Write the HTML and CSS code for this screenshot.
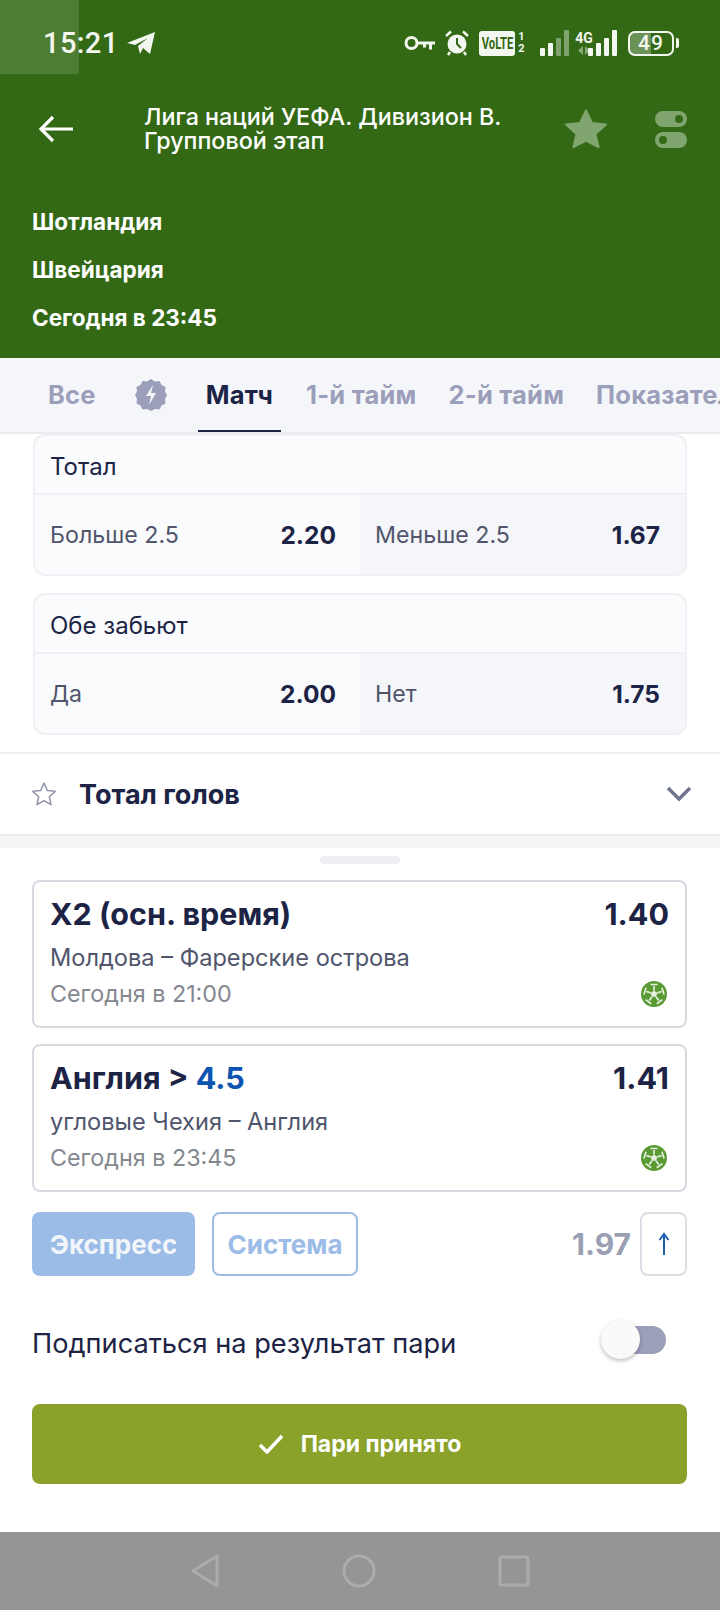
FILE: index.html
```html
<!DOCTYPE html>
<html lang="ru">
<head>
    <meta charset="UTF-8" />
    <meta name="viewport" content="width=device-width, initial-scale=1.0" />
    <title>Пари</title>
    <link rel="stylesheet" href="styles.css">
</head>
<body>
    <div class="screen">
        <header class="header">
            <div class="corner-glow"></div>
            <div class="status-bar">
                <span class="clock">15:21</span>
                <svg class="tg-icon" width="30" height="24" viewBox="0 0 30 24"><path d="M1 12 29 1 24 23 17 17 14 23 12 15 22 7 9 14Z" fill="#f4f7f0"/></svg>
                <div class="status-icons">
                    <svg width="32" height="18" viewBox="0 0 32 18"><circle cx="7.5" cy="9" r="5.5" fill="none" stroke="#f4f7f0" stroke-width="3"/><path d="M13 7.5h18v3h-3v5h-3v-5h-3v3h-3v-3h-6z" fill="#f4f7f0"/></svg>
                    <svg class="alarm" width="26" height="26" viewBox="0 0 26 26"><circle cx="13" cy="14" r="9.5" fill="#f4f7f0"/><path d="M13 8v6l4 4" fill="none" stroke="#336915" stroke-width="2"/><path d="M2 6 7 1.500M24 6 19 1.500M6 22l-2 3M20 22l2 3" stroke="#f4f7f0" stroke-width="2.500"/></svg>
                    <span class="volte"><span>VoLTE</span></span>
                    <span class="sim-nums"><span>1</span><span>2</span></span>
                    <svg class="signal-a" width="30" height="26" viewBox="0 0 30 26"><g fill="#f4f7f0"><rect x="0" y="18" width="5" height="8" rx="1"/><rect x="8" y="13" width="5" height="13" rx="1"/><rect x="16" y="8" width="5" height="18" rx="1" opacity=".4"/><rect x="24" y="0" width="5" height="26" rx="1" opacity=".4"/></g></svg>
                    <div class="net">
                        <span class="net-label">4G</span>
                        <svg width="14" height="9" viewBox="0 0 14 9"><path d="M6 0v9L1 4.500zM8 0v9l5-4.500z" fill="#f4f7f0" opacity=".45"/></svg>
                    </div>
                    <svg class="signal-b" width="30" height="26" viewBox="0 0 30 26"><g fill="#f4f7f0"><rect x="0" y="18" width="5" height="8" rx="1"/><rect x="8" y="13" width="5" height="13" rx="1"/><rect x="16" y="8" width="5" height="18" rx="1"/><rect x="24" y="0" width="5" height="26" rx="1"/></g></svg>
                    <div class="battery"><span>49</span></div>
                    <span class="battery-tip"></span>
                </div>
            </div>

            <div class="title-row">
                <svg class="back-icon" width="36" height="28" viewBox="0 0 36 28"><path d="M15 2 3 14l12 12M3 14h32" fill="none" stroke="#fff" stroke-width="3.200"/></svg>
                <div class="league">Лига наций УЕФА. Дивизион В.<br>Групповой этап</div>
                <svg class="star-icon" width="42" height="40" viewBox="0 0 42 40"><path d="M21 1.500 27 14l14 1.500-10.500 9.500L33.500 38 21 31.500 8.500 38l3-13L1 15.500 15 14z" fill="#80a56e" stroke="#80a56e" stroke-linejoin="round" stroke-width="2"/></svg>
                <svg class="switch-icon" width="32" height="37" viewBox="0 0 32 37"><rect x="0" y="0" width="32" height="16" rx="8" fill="#80a56e"/><circle cx="24" cy="8" r="4" fill="#336915"/><rect x="0" y="21" width="32" height="16" rx="8" fill="#80a56e"/><circle cx="8" cy="29" r="4" fill="#336915"/></svg>
            </div>

            <div class="match-info">
                <div>Шотландия</div>
                <div>Швейцария</div>
                <div>Сегодня в 23:45</div>
            </div>
        </header>

        <nav class="tabs">
            <span class="tab tab-all">Все</span>
            <svg class="tab-bolt" width="32" height="32" viewBox="0 0 32 32"><path d="M16 0l4 2.500 4.500-.500 2 4 4 2-.500 4.500L32 16l-2 4 .500 4.500-4 2-2 4-4.500-.500L16 32l-4-2-4.500.500-2-4-4-2L2 20l-2-4 2-3.500L1.500 8l4-2 2-4 4.500.500z" fill="#9b9fba"/><path d="M18 6l-7 11h5l-2 9 7-12h-5z" fill="#f5f6fa"/></svg>
            <span class="tab tab-active">Матч</span>
            <span class="tab">1-й тайм</span>
            <span class="tab">2-й тайм</span>
            <span class="tab">Показатели</span>
        </nav>

        <section class="markets">
            <div class="market">
                <div class="market-name">Тотал</div>
                <div class="market-odds">
                    <div class="odd"><span>Больше 2.5</span><b>2.20</b></div>
                    <div class="odd odd-alt"><span>Меньше 2.5</span><b>1.67</b></div>
                </div>
            </div>
            <div class="market">
                <div class="market-name">Обе забьют</div>
                <div class="market-odds">
                    <div class="odd"><span>Да</span><b>2.00</b></div>
                    <div class="odd odd-alt"><span>Нет</span><b>1.75</b></div>
                </div>
            </div>
        </section>

        <div class="collapsed-market">
            <svg width="26" height="26" viewBox="0 0 26 26"><path d="M13 2l3.300 7.500 8 .800-6 5.400 1.700 8L13 19.600 6 23.700l1.700-8-6-5.400 8-.800z" fill="none" stroke="#8f93a8" stroke-width="1.500" stroke-linejoin="round"/></svg>
            <span class="collapsed-title">Тотал голов</span>
            <svg class="chevron" width="26" height="16" viewBox="0 0 26 16"><path d="M2 2l11 11L24 2" fill="none" stroke="#70758f" stroke-width="3.500"/></svg>
        </div>

        <div class="sheet-gap"></div>

        <section class="sheet">
            <div class="handle"></div>

            <div class="bet">
                <div class="bet-top"><span>Х2 (осн. время)</span><span>1.40</span></div>
                <div class="bet-teams">Молдова – Фарерские острова</div>
                <div class="bet-bottom">
                    <span>Сегодня в 21:00</span>
                    <svg width="26" height="26" viewBox="0 0 26 26"><circle cx="13" cy="13" r="13" fill="#5a9a35"/><path d="M13 9.500V5M16.300 11.900l4.300-1.400M15.100 15.800l2.600 3.700M10.900 15.800l-2.600 3.700M9.700 11.900l-4.300-1.400M9.500 3.500h7M20.900 6.800l2.200 6.600M21.400 18.600l-5.600 4.200M4.600 18.600l5.600 4.200M5.100 6.800l-2.200 6.600" fill="none" stroke="#e6f0df" stroke-width="1.700"/><path d="M13 9.500l3.300 2.400-1.200 3.900h-4.200l-1.200-3.900z" fill="#e6f0df"/></svg>
                </div>
            </div>

            <div class="bet">
                <div class="bet-top"><span>Англия &gt; <em>4.5</em></span><span>1.41</span></div>
                <div class="bet-teams">угловые Чехия – Англия</div>
                <div class="bet-bottom">
                    <span>Сегодня в 23:45</span>
                    <svg width="26" height="26" viewBox="0 0 26 26"><circle cx="13" cy="13" r="13" fill="#5a9a35"/><path d="M13 9.500V5M16.300 11.900l4.300-1.400M15.100 15.800l2.600 3.700M10.900 15.800l-2.600 3.700M9.700 11.900l-4.300-1.400M9.500 3.500h7M20.900 6.800l2.200 6.600M21.400 18.600l-5.600 4.200M4.600 18.600l5.600 4.200M5.100 6.800l-2.200 6.600" fill="none" stroke="#e6f0df" stroke-width="1.700"/><path d="M13 9.500l3.300 2.400-1.200 3.900h-4.200l-1.200-3.900z" fill="#e6f0df"/></svg>
                </div>
            </div>

            <div class="bet-type">
                <span class="type-btn type-active">Экспресс</span>
                <span class="type-btn">Система</span>
                <span class="total-odd">1.97</span>
                <span class="up-btn">
                    <svg width="12" height="24" viewBox="0 0 12 24"><path d="M6 23V2M1.500 8 6 2l4.500 6" fill="none" stroke="#1d5fae" stroke-width="2"/></svg>
                </span>
            </div>

            <div class="subscribe">
                <span>Подписаться на результат пари</span>
                <div class="switch"><span class="switch-knob"></span></div>
            </div>

            <div class="accept-btn">
                <svg width="26" height="20" viewBox="0 0 26 20"><path d="M2 11l7 7L24 2" fill="none" stroke="#fff" stroke-width="3.500"/></svg>
                <span>Пари принято</span>
            </div>
        </section>

        <footer class="nav-bar">
            <svg width="30" height="34" viewBox="0 0 30 34"><path d="M27 2v30L3 17z" fill="none" stroke="#acacac" stroke-width="3" stroke-linejoin="round"/></svg>
            <svg width="34" height="34" viewBox="0 0 34 34"><circle cx="17" cy="17" r="15" fill="none" stroke="#acacac" stroke-width="3"/></svg>
            <svg width="32" height="32" viewBox="0 0 32 32"><rect x="2" y="2" width="28" height="28" rx="2" fill="none" stroke="#acacac" stroke-width="3"/></svg>
        </footer>
    </div>
</body>
</html>
```

FILE: styles.css
```css
* {
    box-sizing: border-box;
}

body {
    margin: 0;
    font-family: Inter, "Noto Sans", sans-serif;
    background: #fff;
    color: #1c2345;
}

.screen {
    width: 720px;
    height: 1610px;
    overflow: hidden;
}

/* шапка */
.header {
    position: relative;
    height: 358px;
    background: #336915;
    color: #fff;
}

.corner-glow {
    position: absolute;
    left: 0;
    top: 0;
    width: 79px;
    height: 74px;
    background: rgba(255, 255, 255, 0.13);
}

.status-bar {
    position: relative;
    display: flex;
    align-items: center;
    height: 86px;
    padding-left: 43px;
    color: #f4f7f0;
}

.clock {
    font-family: Roboto, sans-serif;
    font-size: 29px;
    font-weight: 500;
    letter-spacing: 0.4px;
}

.tg-icon {
    margin-left: 7px;
}

.status-icons {
    display: flex;
    align-items: center;
    margin-left: auto;
    margin-right: 41px;
    font-family: Roboto, sans-serif;
}

.alarm {
    margin-left: 8px;
}

.volte {
    display: flex;
    justify-content: center;
    width: 36px;
    height: 25px;
    margin-left: 9px;
    border-radius: 3px;
    background: #f4f7f0;
    color: #336915;
    font-size: 16px;
    font-weight: 700;
    line-height: 25px;
}

.volte span {
    transform: scaleX(0.7);
}

.sim-nums {
    display: flex;
    flex-direction: column;
    width: 9px;
    margin-left: 2px;
    font-size: 11px;
    font-weight: 700;
    line-height: 12px;
    text-align: center;
}

.signal-a {
    margin-left: 14px;
}

.net {
    display: flex;
    flex-direction: column;
    align-items: center;
    width: 20px;
    margin-left: 4px;
    margin-right: -6px;
    height: 26px;
}

.net-label {
    font-size: 14px;
    font-weight: 700;
    line-height: 16px;
}

.battery {
    display: flex;
    align-items: center;
    justify-content: center;
    width: 46px;
    height: 25px;
    margin-left: 10px;
    border: 2px solid #f4f7f0;
    border-radius: 7px;
    background: linear-gradient(90deg, #6b9358 49%, transparent 49%);
    font-size: 21px;
    font-weight: 500;
    letter-spacing: 1px;
}

.battery-tip {
    width: 3px;
    height: 10px;
    margin-left: 2px;
    border-radius: 0 2px 2px 0;
    background: #f4f7f0;
}

.title-row {
    display: flex;
    align-items: center;
    height: 86px;
}

.back-icon {
    margin-left: 38px;
}

.league {
    margin-left: 70px;
    width: 421px;
    font-size: 23.3px;
    line-height: 24px;
    font-weight: 500;
}

.switch-icon {
    margin-left: 48px;
}

.match-info {
    padding: 26px 0 0 32px;
    font-size: 22.5px;
    font-weight: 700;
    line-height: 48px;
}

/* вкладки */
.tabs {
    display: flex;
    align-items: center;
    height: 76px;
    padding-left: 48px;
    overflow: hidden;
    background: #f5f6fa;
    border-bottom: 2px solid #e9ebef;
    font-size: 25.5px;
    font-weight: 700;
    letter-spacing: 0.2px;
    color: #9b9fba;
    white-space: nowrap;
}

.tab {
    flex: none;
    line-height: 74px;
    margin-right: 32px;
}

.tab-all {
    margin-right: 39px;
}

.tab-bolt {
    flex: none;
    margin-right: 31px;
}

.tab-active {
    height: 74px;
    margin-right: 25px;
    padding: 0 8px;
    color: #1c2345;
    border-bottom: 2px solid #1c2345;
}

/* рынки */
.markets {
    padding: 0 33px;
}

.market {
    height: 142px;
    margin-bottom: 17px;
    border: 2px solid #eef0f3;
    border-radius: 12px;
    overflow: hidden;
    background: #fafbfc;
}

.market-name {
    height: 59px;
    padding-left: 15px;
    border-bottom: 2px solid #eef0f3;
    font-size: 24px;
    line-height: 62px;
}

.market-odds {
    display: flex;
    height: 79px;
}

.odd {
    display: flex;
    align-items: center;
    justify-content: space-between;
    width: 50%;
    padding: 0 24px 0 15px;
    font-size: 23.2px;
    color: #50556c;
}

.odd b {
    color: #1c2345;
    font-size: 24.5px;
    font-weight: 700;
}

.odd-alt {
    padding-right: 25px;
    background: #f4f6fa;
}

.collapsed-market {
    display: flex;
    align-items: center;
    height: 84px;
    padding: 0 28px 0 31px;
    border-top: 2px solid #eceef1;
    border-bottom: 2px solid #eceef1;
}

.collapsed-title {
    margin-left: 22px;
    font-size: 27px;
    font-weight: 700;
}

.chevron {
    margin-left: auto;
}

.sheet-gap {
    height: 12px;
    background: #f5f5f5;
}

/* купон */
.sheet {
    height: 684px;
    padding: 8px 33px 0 32px;
}

.handle {
    width: 80px;
    height: 8px;
    margin: 0 auto 16px;
    border-radius: 4px;
    background: #eceef1;
}

.bet {
    height: 148px;
    margin-bottom: 16px;
    padding: 0 16px;
    border: 2px solid #d8dae2;
    border-radius: 8px;
}

.bet-top {
    display: flex;
    justify-content: space-between;
    padding-top: 14px;
    font-size: 30.5px;
    font-weight: 700;
    line-height: 36px;
}

.bet-top em {
    font-style: normal;
    color: #0d55b0;
}

.bet-teams {
    margin-top: 11px;
    font-size: 23.6px;
    line-height: 30px;
    color: #50556c;
}

.bet-bottom {
    display: flex;
    align-items: center;
    justify-content: space-between;
    margin-top: 6px;
    font-size: 23.3px;
    color: #85888f;
    padding-right: 2px;
}

.bet-type {
    display: flex;
    align-items: center;
    height: 64px;
    margin-top: 20px;
}

.type-btn {
    display: flex;
    align-items: center;
    justify-content: center;
    width: 146px;
    height: 64px;
    margin-left: 17px;
    border: 2px solid #9dbde0;
    border-radius: 8px;
    color: #9abce6;
    font-size: 26px;
    font-weight: 700;
}

.type-active {
    width: 163px;
    margin-left: 0;
    border: 0;
    background: #9abce6;
    color: #f2f6fb;
}

.total-odd {
    margin-left: auto;
    margin-right: 9px;
    color: #9b9fb4;
    font-size: 30px;
    font-weight: 700;
}

.up-btn {
    display: flex;
    align-items: center;
    justify-content: center;
    width: 47px;
    height: 64px;
    border: 2px solid #dcdee6;
    border-radius: 8px;
}

.subscribe {
    display: flex;
    align-items: center;
    justify-content: space-between;
    height: 60px;
    margin-top: 37px;
    font-size: 27.2px;
    padding-right: 21px;
}

.switch {
    position: relative;
    width: 51px;
    height: 28px;
    margin-top: -6px;
    border-radius: 14px;
    background: #9b9fba;
}

.switch-knob {
    position: absolute;
    left: -14px;
    top: -6px;
    width: 39px;
    height: 39px;
    border-radius: 50%;
    background: #fafafa;
    box-shadow: 0 2px 4px rgba(0, 0, 0, 0.25);
}

.accept-btn {
    display: flex;
    align-items: center;
    justify-content: center;
    gap: 17px;
    height: 80px;
    margin-top: 31px;
    border-radius: 8px;
    background: #8aa12a;
    color: #fff;
    font-size: 23px;
    font-weight: 700;
}

.nav-bar {
    display: flex;
    align-items: center;
    justify-content: center;
    gap: 122px;
    height: 78px;
    background: #959595;
}
```
